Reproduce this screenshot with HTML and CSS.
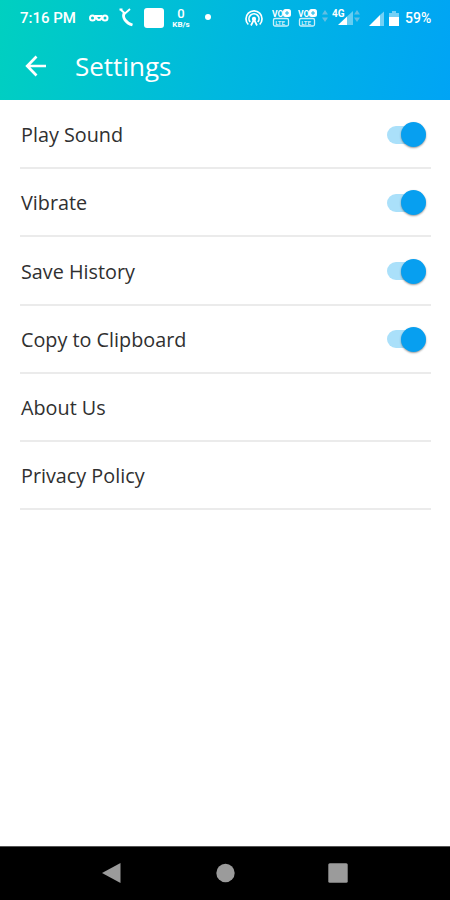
FILE: index.html
```
<!DOCTYPE html>
<html lang="en">
<head>
<meta charset="utf-8">
<title>Settings</title>
<link rel="stylesheet" href="styles.css">
</head>
<body>
<div class="screen">
  <header class="top">
    <div class="status">
      <span class="time">7:16 PM</span>
      <svg class="i-key" width="20" height="10" viewBox="0 0 20 10" fill="none" stroke="#fff" stroke-width="2"><circle cx="3.500" cy="5" r="2.500"/><path d="M7.500 2v3.500q2.500 3 5 0V2M6 3h7"/><circle cx="16" cy="5" r="2.500"/></svg>
      <svg class="i-call" width="16" height="20" viewBox="0 0 16 20" fill="none" stroke="#fff"><path d="M1.500 2.500h3M2.500 2.500L7 6.500l5-4.500" stroke-width="1.900"/><path d="M6.500 5.500C3.500 10.500 8 16 14.500 18" stroke-width="2.800"/></svg>
      <span class="tile"></span>
      <span class="speed"><b>0</b><small>KB/s</small></span>
      <span class="dot"></span>
      <svg class="i-cast" width="20" height="18" viewBox="0 0 20 18" fill="none" stroke="#fff" stroke-width="1.700"><path d="M4.300 15.500a8 8 0 1 1 11.400 0M6.200 13a5 5 0 1 1 7.600 0"/><path d="M7 16.500l3-6 3 6"/><circle cx="10" cy="10" r="1.300" fill="#fff"/></svg>
      <svg class="volte" width="20" height="18" viewBox="0 0 20 18"><text x="0" y="8">VO</text><rect x="11" y="0" width="8" height="8" rx="2.500" fill="#fff"/><path d="M15 2v4M13 4h4" stroke="#16b6e5"/><rect x="1.500" y="9.500" width="15" height="7.500" rx="1.500" fill="none" stroke="#fff" stroke-opacity=".8" stroke-width="1.300"/><text class="lte" x="3.200" y="15.600">LTE</text></svg>
      <svg class="volte second" width="20" height="18" viewBox="0 0 20 18"><text x="0" y="8">VO</text><rect x="11" y="0" width="8" height="8" rx="2.500" fill="#fff"/><path d="M15 2v4M13 4h4" stroke="#16b6e5"/><rect x="1.500" y="9.500" width="15" height="7.500" rx="1.500" fill="none" stroke="#fff" stroke-opacity=".8" stroke-width="1.300"/><text class="lte" x="3.200" y="15.600">LTE</text></svg>
      <svg class="i-arrows" width="6" height="14" viewBox="0 0 6 14" fill="#62bfe3"><path d="M0 5.500L3 1l3 4.500zM0 8.500h6L3 13z"/></svg>
      <svg class="i-4g" width="22" height="18" viewBox="0 0 22 18"><path d="M15 7.500L21 2v14h-6z" fill="#fff" opacity=".4"/><path d="M6 16l9-8.500V16z" fill="#fff"/><text x="0" y="7.500">4G</text></svg>
      <svg class="i-arrows two" width="6" height="14" viewBox="0 0 6 14" fill="#62bfe3"><path d="M0 5.500L3 1l3 4.500zM0 8.500h6L3 13z"/></svg>
      <svg class="i-signal" width="15" height="16" viewBox="0 0 15 16" fill="#fff"><path d="M11 4l4-3.500V15h-4z" opacity=".45"/><path d="M0 15L11 4v11z"/></svg>
      <svg class="i-batt" width="10" height="16" viewBox="0 0 10 16" fill="#fff"><path d="M0 2h3V0h4v2h3v4H0z" opacity=".45"/><path d="M0 6h10v9H0z"/></svg>
      <span class="pct">59%</span>
    </div>
    <div class="bar">
      <svg width="22" height="22" viewBox="0 0 22 22" fill="none" stroke="#fff" stroke-width="2.700"><path d="M21 11H2.500M11.500 1.500L2.200 11l9.300 9.500"/></svg>
      <h1>Settings</h1>
    </div>
  </header>
  <main class="list">
    <div class="row"><span>Play Sound</span><i class="switch"></i></div>
    <div class="row"><span>Vibrate</span><i class="switch"></i></div>
    <div class="row"><span>Save History</span><i class="switch"></i></div>
    <div class="row"><span>Copy to Clipboard</span><i class="switch"></i></div>
    <div class="row"><span>About Us</span></div>
    <div class="row"><span>Privacy Policy</span></div>
  </main>
  <nav class="nav">
    <svg width="20" height="22" viewBox="0 0 20 22"><path d="M1 11L19.500 1v20z" fill="#9b9b9b"/></svg>
    <svg width="20" height="20" viewBox="0 0 20 20"><circle cx="10.500" cy="10" r="9.200" fill="#9b9b9b"/></svg>
    <svg width="20" height="20" viewBox="0 0 20 20"><rect x=".3" y=".3" width="19.400" height="19.400" rx="1.500" fill="#9b9b9b"/></svg>
  </nav>
</div>
</body>
</html>
```
FILE: styles.css
```
* { box-sizing: border-box; }
body { margin: 0; background: #fff; font-family: "Open Sans", sans-serif; }
.screen { width: 450px; height: 900px; display: flex; flex-direction: column; overflow: hidden; }
.top { height: 100px; flex: none; background: linear-gradient(102deg, #00d0c0 0%, #00b8df 50%, #00a4f5 100%); color: #fff; }
.status { height: 36px; display: flex; align-items: center; padding-left: 20px; font-family: Roboto, sans-serif; font-weight: 500; }
.status > * { flex: none; }
.time { width: 57px; font-size: 15px; white-space: nowrap; }
.i-key { margin-left: 12px; }
.i-call { margin-left: 9px; margin-top: -2px; }
.tile { width: 20px; height: 20px; margin-left: 10px; border-radius: 3px; background: #fff; margin-top: -1px; }
.speed { width: 20px; margin-left: 7px; display: flex; flex-direction: column; align-items: center; }
.speed b { font-size: 13px; line-height: 13px; font-weight: 500; }
.speed small { font-size: 8px; line-height: 10px; font-weight: 700; }
.dot { width: 6px; height: 6px; margin-left: 14px; border-radius: 50%; background: #fff; margin-top: -2px; }
.i-cast { margin-left: 33px; }
.volte { margin-left: 8px; }
.volte.second { margin-left: 6px; }
.volte text { font-size: 8.500px; font-weight: 700; fill: #fff; }
.volte .lte { font-size: 6px; fill-opacity: .8; }
.i-arrows { margin-left: 4px; margin-top: -4px; }
.i-4g { margin-left: 4px; }
.i-4g text { font-size: 10px; font-weight: 700; fill: #fff; }
.i-arrows.two { margin-left: 0; }
.i-signal { margin-left: 9px; margin-top: 1px; }
.i-batt { margin-left: 5px; margin-top: 1px; }
.pct { margin-left: 6px; font-size: 14px; }
.bar { height: 60px; display: flex; align-items: center; padding-left: 25px; }
.bar h1 { margin: 0 0 0 28px; font-size: 26px; line-height: 34px; font-weight: 500; }
.list { flex: 1; padding: 1px 19px 0 20px; }
.row { height: 68.220px; display: flex; align-items: center; justify-content: space-between; padding: 1px 5px 0 1px; border-bottom: 2px solid #ebebeb; font-size: 19.800px; color: #303030; }
.switch { display: flex; align-items: center; justify-content: flex-end; width: 34px; height: 18px; margin-right: 5px; border-radius: 9px; background: #aae0fa; }
.switch::after { content: ""; flex: none; width: 25px; height: 25px; margin-right: -5px; border-radius: 50%; background: #079ff0; box-shadow: 0 1px 2px rgba(0, 0, 0, .4); }
.nav { height: 54px; flex: none; display: flex; align-items: center; background: #000; padding-left: 101px; border-top: 1px solid #555; }
.nav svg { margin-top: -1px; }
.nav svg:nth-child(2) { margin-left: 94px; }
.nav svg:nth-child(3) { margin-left: 93px; }
```
